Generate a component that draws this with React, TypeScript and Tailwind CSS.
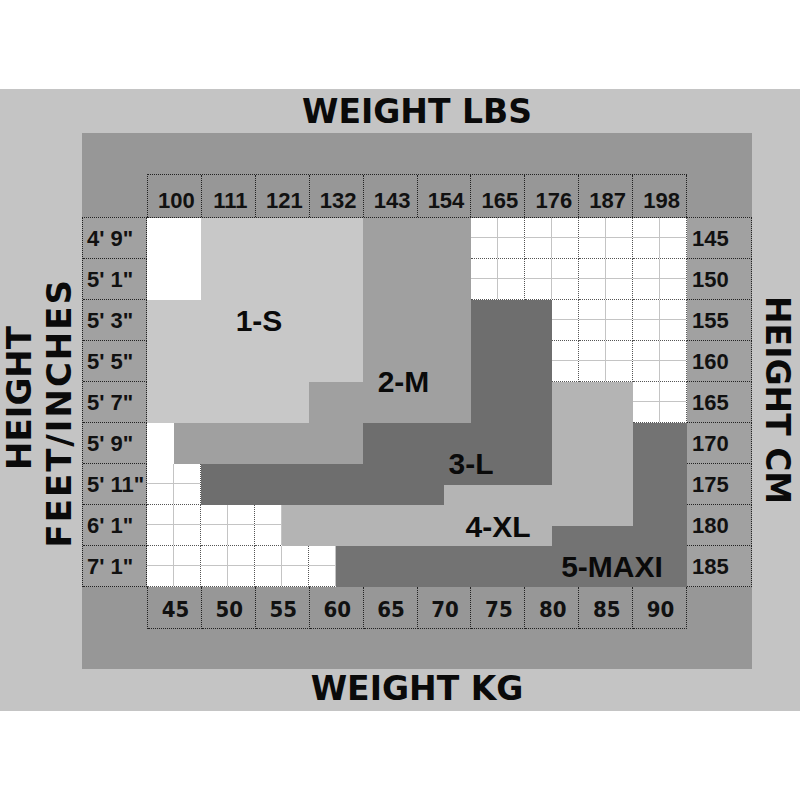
import React from "react";

const lbs = ["100", "111", "121", "132", "143", "154", "165", "176", "187", "198"];
const kg = ["45", "50", "55", "60", "65", "70", "75", "80", "85", "90"];
const ft = ["4' 9\"", "5' 1\"", "5' 3\"", "5' 5\"", "5' 7\"", "5' 9\"", "5' 11\"", "6' 1\"", "7' 1\""];
const cm = ["145", "150", "155", "160", "165", "170", "175", "180", "185"];

const S1 = "bg-[#c8c8c8]";
const M2 = "bg-[#a0a0a0]";
const L3 = "bg-[#6e6e6e]";
const XL4 = "bg-[#b4b4b4]";
const MX5 = "bg-[#737373]";

function WhiteCell() {
  return (
    <div className="bg-white border-r border-b border-dotted border-[#555] grid grid-cols-2 grid-rows-2">
      <div className="border-r border-b border-[#c4c4c4]" />
      <div className="border-b border-[#c4c4c4]" />
      <div className="border-r border-[#c4c4c4]" />
      <div />
    </div>
  );
}

export default function App() {
  const title = "[font-family:'DejaVu_Sans',sans-serif] font-bold text-[#0a0a0a]";
  const arial = "[font-family:'Liberation_Sans',Arial,sans-serif]";
  const num = `${arial} font-bold text-[21px] text-[#111]`;
  const label = `${arial} font-bold text-[30px] text-[#0a0a0a] leading-none`;
  return (
    <div className="w-[800px] h-[800px] bg-white pt-[89px]">
      <div className="h-[622px] bg-[#c4c4c4] flex">
        {/* left vertical title */}
        <div className="w-[82px] flex items-center justify-center gap-[6px] pt-[4px]">
          <div className={`${title} text-[34px] leading-[34px] [writing-mode:vertical-rl] rotate-180 mt-[-8px] ml-[-4px]`}>
            HEIGHT
          </div>
          <div className={`${title} text-[34px] leading-[34px] tracking-[2px] [writing-mode:vertical-rl] rotate-180 mt-[22px]`}>
            FEET/INCHES
          </div>
        </div>

        {/* center column */}
        <div className="w-[670px] flex flex-col">
          <div className={`h-[44px] flex items-center justify-center ${title} text-[33px] pt-[2px]`}>
            WEIGHT LBS
          </div>

          <div className="h-[536px] bg-[#979797] grid grid-cols-[65px_540px_65px] grid-rows-[41px_43px_370px_42px_40px]">
            <div className="col-span-3" />

            {/* lbs header */}
            <div />
            <div className="flex border-t border-l border-dotted border-[#222]">
              {lbs.map((v) => (
                <div
                  key={v}
                  className={`flex-1 flex items-center justify-center pt-[8px] pl-[4px] border-r border-dotted border-[#222] ${num} text-[22px]`}
                >
                  {v}
                </div>
              ))}
            </div>
            <div />

            {/* left labels */}
            <div className="grid grid-rows-9 border-t border-l border-dotted border-[#222] bg-[#a1a1a1]">
              {ft.map((v) => (
                <div
                  key={v}
                  className={`flex items-center pl-[4px] border-b border-r border-dotted border-[#222] whitespace-nowrap ${num} text-[22px]`}
                >
                  {v}
                </div>
              ))}
            </div>

            {/* body */}
            <div className="grid grid-cols-1 grid-rows-1 border-t border-dotted border-[#222]">
              <div className="col-start-1 row-start-1 grid grid-cols-10 grid-rows-9">
                {Array.from({ length: 90 }).map((_, i) => (
                  <WhiteCell key={i} />
                ))}
              </div>
              <div className="col-start-1 row-start-1 grid grid-cols-[repeat(20,minmax(0,1fr))] grid-rows-[repeat(18,minmax(0,1fr))]">
                {/* plain white patches */}
                <div className="bg-white col-start-1 col-end-3 row-start-1 row-end-5" />
                <div className="bg-white col-start-1 col-end-2 row-start-11 row-end-13" />
                {/* 1-S */}
                <div className={`${S1} col-start-3 col-end-9 row-start-1 row-end-5`} />
                <div className={`${S1} col-start-1 col-end-9 row-start-5 row-end-9`} />
                <div className={`${S1} col-start-1 col-end-7 row-start-9 row-end-11`} />
                {/* 2-M */}
                <div className={`${M2} col-start-9 col-end-13 row-start-1 row-end-11`} />
                <div className={`${M2} col-start-7 col-end-9 row-start-9 row-end-11`} />
                <div className={`${M2} col-start-2 col-end-9 row-start-11 row-end-13`} />
                {/* 3-L */}
                <div className={`${L3} col-start-13 col-end-16 row-start-5 row-end-11`} />
                <div className={`${L3} col-start-9 col-end-16 row-start-11 row-end-14`} />
                <div className={`${L3} col-start-3 col-end-9 row-start-13 row-end-15`} />
                <div className={`${L3} col-start-9 col-end-12 row-start-14 row-end-15`} />
                {/* 4-XL */}
                <div className={`${XL4} col-start-16 col-end-19 row-start-9 row-end-16`} />
                <div className={`${XL4} col-start-12 col-end-16 row-start-14 row-end-16`} />
                <div className={`${XL4} col-start-6 col-end-12 row-start-15 row-end-16`} />
                <div className={`${XL4} col-start-6 col-end-16 row-start-16 row-end-17`} />
                {/* 5-MAXI */}
                <div className={`${MX5} col-start-19 col-end-21 row-start-11 row-end-17`} />
                <div className={`${MX5} col-start-16 col-end-21 row-start-16 row-end-17`} />
                <div className={`${MX5} col-start-8 col-end-21 row-start-17 row-end-19`} />

                {/* labels */}
                <div className={`col-start-3 col-end-7 row-start-5 row-end-7 flex items-center justify-center pl-[8px] ${label}`}>
                  1-S
                </div>
                <div className={`col-start-9 col-end-12 row-start-8 row-end-10 flex items-center justify-center ${label}`}>
                  2-M
                </div>
                <div className={`col-start-12 col-end-14 row-start-12 row-end-14 flex items-center justify-center ${label}`}>
                  3-L
                </div>
                <div className={`col-start-13 col-end-15 row-start-15 row-end-17 flex items-center justify-center pt-[2px] whitespace-nowrap ${label}`}>
                  4-XL
                </div>
                <div className={`col-start-15 col-end-21 row-start-17 row-end-19 flex items-center justify-center pl-[12px] whitespace-nowrap ${label}`}>
                  5-MAXI
                </div>
              </div>
            </div>

            {/* right labels */}
            <div className="grid grid-rows-9 border-t border-dotted border-[#222] bg-[#a1a1a1]">
              {cm.map((v) => (
                <div
                  key={v}
                  className={`flex items-center pl-[5px] border-b border-r border-dotted border-[#222] ${num} text-[22px]`}
                >
                  {v}
                </div>
              ))}
            </div>

            {/* kg row */}
            <div />
            <div className="flex border-l border-dotted border-[#222]">
              {kg.map((v) => (
                <div
                  key={v}
                  className={`flex-1 flex items-center justify-center pt-[4px] pl-[2px] border-r border-b border-dotted border-[#222] [font-family:'Liberation_Sans_Narrow','DejaVu_Sans_Condensed',sans-serif] font-bold text-[22px] text-[#111]`}
                >
                  {v}
                </div>
              ))}
            </div>
            <div />

            <div className="col-span-3" />
          </div>

          <div className={`h-[42px] flex items-center justify-center ${title} text-[33px] pb-[2px]`}>
            WEIGHT KG
          </div>
        </div>

        {/* right vertical title */}
        <div className="w-[48px] flex items-center justify-center pl-[2px]">
          <div className={`${title} text-[33px] leading-[34px] [writing-mode:vertical-rl]`}>
            HEIGHT CM
          </div>
        </div>
      </div>
    </div>
  );
}
